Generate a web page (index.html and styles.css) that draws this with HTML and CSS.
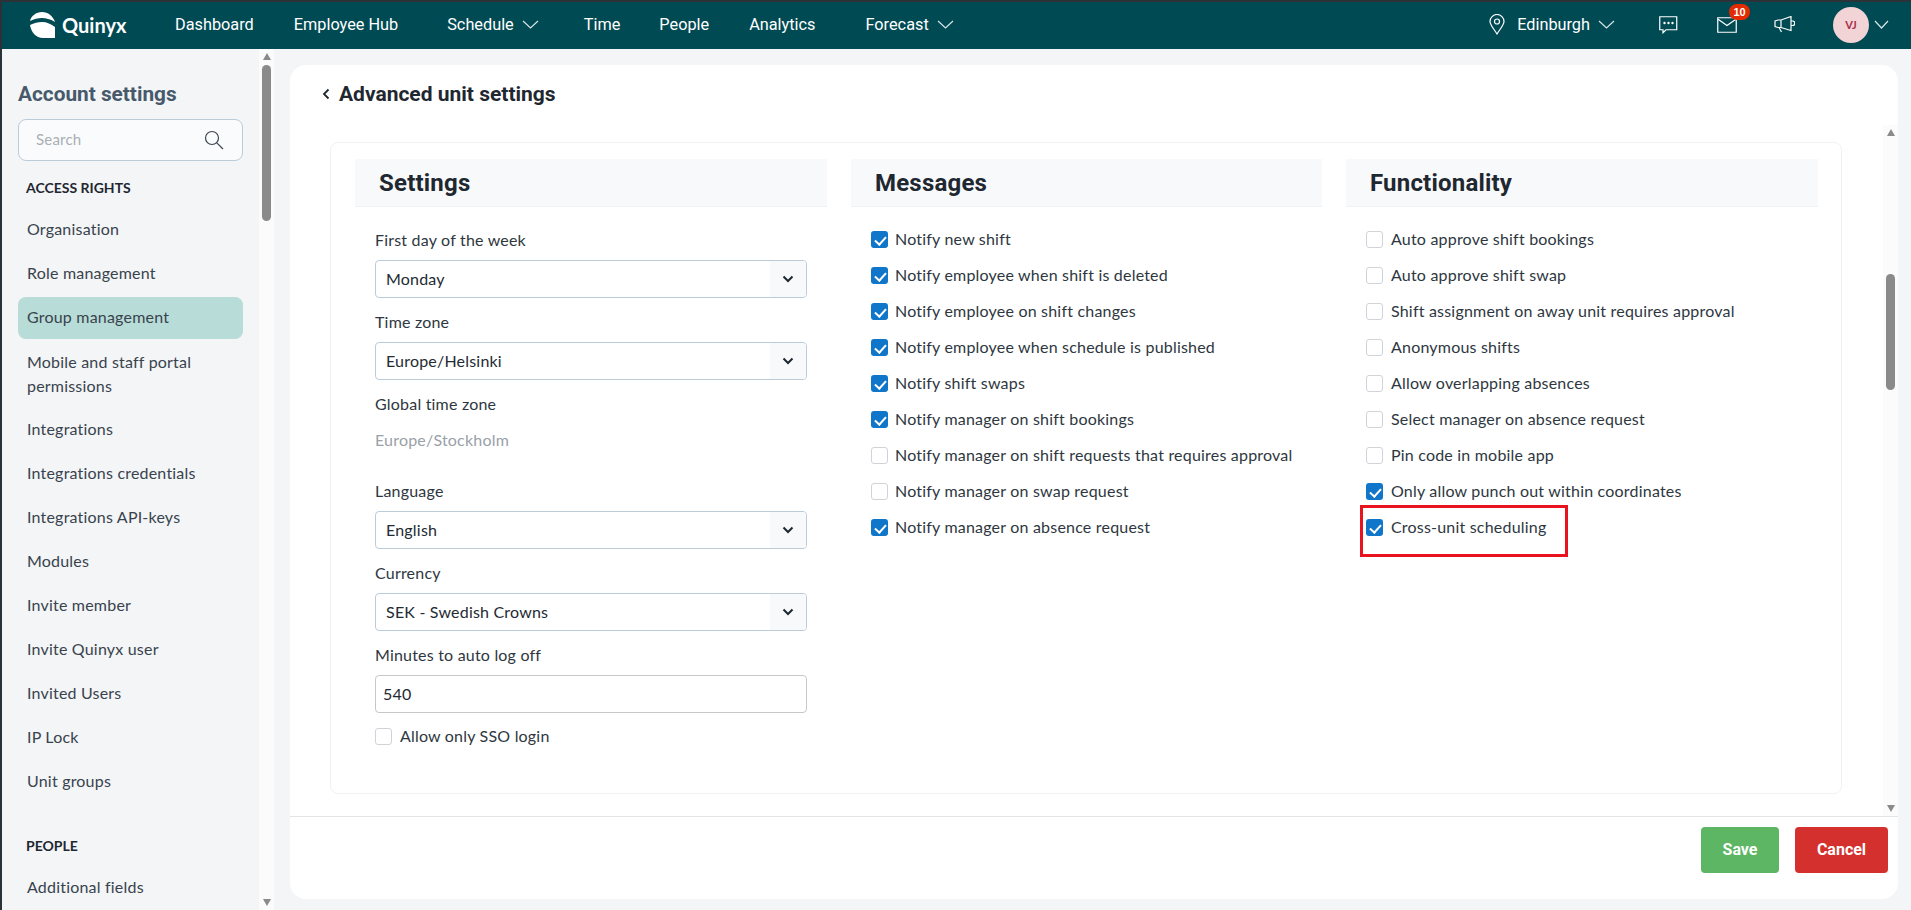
FILE: index.html
```html
<!DOCTYPE html>
<html>
<head>
	<meta charset="utf-8">
	<title>Advanced unit settings</title>
	<link rel="stylesheet" href="styles.css">
</head>
<body>

<div class="nav">
	<a class="logo" href="#">
		<svg width="27" height="26" viewBox="0 0 27 26"><path fill="#fff" d="M1 9C2 4 7 0 13 0c6 0 11 4 13 10-5-3-9-4-13-4C9 6 5 7 1 9z"/><path fill="#fff" d="M1 13c4-2 8-3 12-3 5 0 9 2 13 5v11H14C7 26 2 20 1 13z"/></svg>
		<span>Quinyx</span>
	</a>
	<ul class="menu">
		<li class="m-dash"><a href="#">Dashboard</a></li>
		<li class="m-hub"><a href="#">Employee Hub</a></li>
		<li class="m-sched"><a href="#">Schedule</a><svg class="caret" width="17" height="9" viewBox="0 0 17 9"><path d="M1 1l7.500 7L16 1"/></svg></li>
		<li class="m-time"><a href="#">Time</a></li>
		<li class="m-people"><a href="#">People</a></li>
		<li class="m-ana"><a href="#">Analytics</a></li>
		<li class="m-fore"><a href="#">Forecast</a><svg class="caret" width="17" height="9" viewBox="0 0 17 9"><path d="M1 1l7.500 7L16 1"/></svg></li>
	</ul>
	<div class="nav-right">
		<svg class="pin" width="16" height="21" viewBox="0 0 16 21"><path d="M8 20C5 15 1 11 1 7.500a7 7 0 0 1 14 0C15 11 11 15 8 20z"/><circle cx="8" cy="7.500" r="2.500"/></svg>
		<span class="place">Edinburgh</span>
		<svg class="caret place-caret" width="17" height="9" viewBox="0 0 17 9"><path d="M1 1l7.500 7L16 1"/></svg>
		<svg class="icon-chat" width="19" height="18" viewBox="0 0 19 18"><path d="M.75.75h17v13H7l-3 3v-3H.75z"/><circle class="dot" cx="5.500" cy="7" r="1.200"/><circle class="dot" cx="9.500" cy="7" r="1.200"/><circle class="dot" cx="13.500" cy="7" r="1.200"/></svg>
		<div class="mail">
			<svg width="20" height="16" viewBox="0 0 20 16"><path d="M.75.75h18.500v14.500H.75zM.75 2L10 8.500 19.250 2"/></svg>
			<span class="badge">10</span>
		</div>
		<svg class="icon-horn" width="21" height="17" viewBox="0 0 21 17"><path d="M1 5l3-1h3l10-3.500v14L7 11.500H4L1 10.500zM7 4v7.500M17 5h1.500a2 2 0 0 1 0 4.500H17M5 11.500L7.500 16"/></svg>
		<span class="avatar">VJ</span>
		<svg class="caret" width="15" height="9" viewBox="0 0 15 9"><path d="M1 1l6.500 7L14 1"/></svg>
	</div>
</div>

<div class="page">

	<div class="side">
		<div class="side-in">
			<h2>Account settings</h2>
			<div class="search">
				<span>Search</span>
				<svg width="20" height="20" viewBox="0 0 20 20"><circle cx="8" cy="8" r="6.500"/><path d="M12.800 12.800L19 19"/></svg>
			</div>
			<h3>ACCESS RIGHTS</h3>
			<ul class="side-list">
				<li>Organisation</li>
				<li>Role management</li>
				<li class="on">Group management</li>
				<li class="two">Mobile and staff portal permissions</li>
				<li>Integrations</li>
				<li>Integrations credentials</li>
				<li>Integrations API-keys</li>
				<li>Modules</li>
				<li>Invite member</li>
				<li>Invite Quinyx user</li>
				<li>Invited Users</li>
				<li>IP Lock</li>
				<li>Unit groups</li>
			</ul>
			<h3 class="people">PEOPLE</h3>
			<ul class="side-list">
				<li>Additional fields</li>
			</ul>
		</div>
		<div class="bar">
			<i class="up"></i>
			<b class="thumb thumb-side"></b>
			<i class="down"></i>
		</div>
	</div>

	<div class="panel">
		<div class="panel-head">
			<svg width="8" height="12" viewBox="0 0 8 12"><path d="M6.500 1.500L2 6l4.500 4.500"/></svg>
			<h1>Advanced unit settings</h1>
		</div>
		<div class="panel-body">
			<div class="scroll">
				<div class="card">

					<div class="col">
						<h4>Settings</h4>
						<div class="form">
							<label>First day of the week</label>
							<div class="select"><span>Monday</span><em><svg width="12" height="8" viewBox="0 0 12 8"><path d="M1.500 1.500L6 6l4.500-4.500"/></svg></em></div>
							<label>Time zone</label>
							<div class="select"><span>Europe/Helsinki</span><em><svg width="12" height="8" viewBox="0 0 12 8"><path d="M1.500 1.500L6 6l4.500-4.500"/></svg></em></div>
							<label>Global time zone</label>
							<div class="static">Europe/Stockholm</div>
							<label>Language</label>
							<div class="select"><span>English</span><em><svg width="12" height="8" viewBox="0 0 12 8"><path d="M1.500 1.500L6 6l4.500-4.500"/></svg></em></div>
							<label>Currency</label>
							<div class="select"><span>SEK - Swedish Crowns</span><em><svg width="12" height="8" viewBox="0 0 12 8"><path d="M1.500 1.500L6 6l4.500-4.500"/></svg></em></div>
							<label>Minutes to auto log off</label>
							<div class="input">540</div>
							<div class="check sso"><i class="box"></i><span>Allow only SSO login</span></div>
						</div>
					</div>

					<div class="col">
						<h4>Messages</h4>
						<div class="checks">
							<div class="check"><i class="box on"></i><span>Notify new shift</span></div>
							<div class="check"><i class="box on"></i><span>Notify employee when shift is deleted</span></div>
							<div class="check"><i class="box on"></i><span>Notify employee on shift changes</span></div>
							<div class="check"><i class="box on"></i><span>Notify employee when schedule is published</span></div>
							<div class="check"><i class="box on"></i><span>Notify shift swaps</span></div>
							<div class="check"><i class="box on"></i><span>Notify manager on shift bookings</span></div>
							<div class="check"><i class="box"></i><span>Notify manager on shift requests that requires approval</span></div>
							<div class="check"><i class="box"></i><span>Notify manager on swap request</span></div>
							<div class="check"><i class="box on"></i><span>Notify manager on absence request</span></div>
						</div>
					</div>

					<div class="col">
						<h4>Functionality</h4>
						<div class="checks">
							<div class="check"><i class="box"></i><span>Auto approve shift bookings</span></div>
							<div class="check"><i class="box"></i><span>Auto approve shift swap</span></div>
							<div class="check"><i class="box"></i><span>Shift assignment on away unit requires approval</span></div>
							<div class="check"><i class="box"></i><span>Anonymous shifts</span></div>
							<div class="check"><i class="box"></i><span>Allow overlapping absences</span></div>
							<div class="check"><i class="box"></i><span>Select manager on absence request</span></div>
							<div class="check"><i class="box"></i><span>Pin code in mobile app</span></div>
							<div class="check"><i class="box on"></i><span>Only allow punch out within coordinates</span></div>
							<div class="check marked"><i class="box on"></i><span>Cross-unit scheduling</span><b class="redbox"></b></div>
						</div>
					</div>

				</div>
			</div>
			<div class="bar">
				<i class="up"></i>
				<b class="thumb thumb-main"></b>
				<i class="down"></i>
			</div>
		</div>
		<div class="panel-foot">
			<a class="btn save" href="#">Save</a>
			<a class="btn cancel" href="#">Cancel</a>
		</div>
	</div>

</div>

</body>
</html>
```

FILE: styles.css
```css
* {box-sizing: border-box;}
html, body {margin: 0; padding: 0; height: 100%; overflow: hidden;}
body {display: flex; flex-direction: column; background-color: #f3f5f7; border-top: 2px solid #2c3338; border-left: 2px solid #2c3338; font-family: "Lato", "Open Sans", sans-serif; font-size: 16px; letter-spacing: .2px; color: #232b33;}
ul {list-style: none; margin: 0; padding: 0;}
a {text-decoration: none; color: inherit;}
h1, h2, h3, h4 {margin: 0;}

/* top bar */
.nav {display: flex; align-items: center; height: 47px; flex: none; padding-bottom: 2px; background-color: #004a54; color: #fff; font-family: "Roboto", sans-serif; font-size: 16.300px; letter-spacing: 0;}
.nav svg {fill: none; stroke: #fff; stroke-width: 1.200;}
.logo {display: flex; align-items: center; gap: 6px; margin-left: 27px; width: 106px; font-family: "Lato", sans-serif; font-weight: 700; font-size: 20px;}
.logo svg {stroke: none;}
.menu {display: flex;}
.menu li {display: flex; align-items: center; gap: 8px;}
.m-dash {margin-left: 40px;}
.m-hub {margin-left: 40px;}
.m-sched {margin-left: 49px;}
.m-time {margin-left: 45px;}
.m-people {margin-left: 39px;}
.m-ana {margin-left: 40px;}
.m-fore {margin-left: 50px;}
.caret {opacity: .85;}
.nav-right {display: flex; align-items: center; margin-left: auto; margin-right: 22px;}
.place {margin-left: 12px;}
.place-caret {margin-left: 8px;}
.icon-chat {margin-left: 44px;}
.icon-chat .dot {fill: #fff; stroke: none;}
.mail {position: relative; display: flex; margin-left: 39px;}
.badge {position: absolute; left: 12px; top: -13px; width: 21px; height: 16px; border-radius: 8px; background-color: #e32a00; font-family: "Liberation Sans", sans-serif; font-weight: 700; font-size: 11px; line-height: 16px; text-align: center;}
.icon-horn {margin-left: 37px;}
.avatar {display: block; width: 36px; height: 36px; margin: 0 5px 0 38px; border-radius: 50%; background-color: #f2d3d6; color: #a8324a; font-family: "Lato", sans-serif; font-size: 11px; font-weight: 700; line-height: 36px; text-align: center;}

/* page */
.page {display: flex; flex: 1; min-height: 0;}

/* left menu */
.side {display: flex; width: 272px; flex: none; overflow: hidden;}
.side-in {width: 257px; flex: none; padding: 0 16px;}
.side h2 {margin-top: 33px; font-family: "Roboto", sans-serif; font-size: 20.800px; line-height: 24px; font-weight: 700; letter-spacing: 0; color: #47596a;}
.search {display: flex; align-items: center; justify-content: space-between; height: 42px; margin-top: 13px; padding: 0 18px 0 17px; border: 1px solid #bccbd8; border-radius: 8px; background-color: #fafbfc; color: #a9afb5; font-size: 15px;}
.search span {margin-top: -2px;}
.search svg {fill: none; stroke: #3a4650; stroke-width: 1.200;}
.side h3 {margin: 17px 0 0 8px; font-size: 14px; line-height: 20px; font-weight: 700; letter-spacing: 0; color: #1f2830;}
.side h3.people {margin-top: 33px;}
.side-list {margin-top: 11px;}
.side-list li {height: 42px; margin-bottom: 2px; padding-left: 9px; line-height: 40px; border-radius: 8px; color: #39434d;}
.side-list li.on {background-color: #b8dcd7;}
.side-list li.two {display: flex; align-items: center; height: 68px; margin: 0; padding-bottom: 2px; line-height: 24px;}

/* fake scrollbars, the page is a picture of a scrolled state */
.bar {display: flex; flex-direction: column; align-items: center; width: 15px; flex: none; background-color: #fbfbfb;}
.bar .up {width: 0; height: 0; margin-top: 4px; border-left: 4.500px solid transparent; border-right: 4.500px solid transparent; border-bottom: 7px solid #8a8a8a;}
.bar .down {width: 0; height: 0; margin-top: auto; margin-bottom: 4px; border-left: 4.500px solid transparent; border-right: 4.500px solid transparent; border-top: 7px solid #8a8a8a;}
.thumb {display: block; width: 9px; border-radius: 5px; background-color: #8a8a8a;}
.thumb-side {height: 156px; margin-top: 5px;}
.thumb-main {height: 116px; margin-top: 138px;}

/* main panel */
.panel {display: flex; flex-direction: column; width: 1608px; height: 834px; margin: 16px 0 0 16px; flex: none; border-radius: 16px; background-color: #fff; overflow: hidden;}
.panel-head {display: flex; align-items: center; gap: 9px; height: 60px; flex: none; padding: 0 0 2px 32px;}
.panel-head svg {fill: none; stroke: #1f2830; stroke-width: 1.800;}
.panel-head h1 {font-family: "Roboto", sans-serif; font-size: 21px; font-weight: 700; letter-spacing: 0; color: #1f2830;}
.panel-body {display: flex; flex: 1; min-height: 0;}
.scroll {flex: 1; padding: 17px 0 0 40px;}
.card {display: grid; grid-template-columns: 472px 471px 472px; column-gap: 24px; width: 1512px; height: 652px; padding: 16px 24px 0; border: 1px solid #eff1f3; border-radius: 8px;}
.col h4 {height: 48px; padding-left: 24px; border-bottom: 1px solid #eff1f3; background-color: #f8f9fb; font-family: "Roboto", sans-serif; font-size: 24px; line-height: 48px; font-weight: 700; letter-spacing: .2px; color: #1f2830;}
.form {padding: 22px 20px 0;}
.form label {display: block; height: 22px; line-height: 22px; margin-bottom: 9px; color: #2e3740;}
.select {display: flex; justify-content: space-between; height: 38px; margin-bottom: 13px; border: 1px solid #bccbd8; border-radius: 4px; line-height: 35px; overflow: hidden;}
.select span {padding-left: 10px;}
.select em {display: flex; align-items: center; justify-content: center; width: 36px; background-color: #f8f9fb;}
.select svg {fill: none; stroke: #1f2830; stroke-width: 2;}
.static {height: 22px; line-height: 22px; margin: 14px 0 29px; color: #9aa1a8;}
.input {height: 38px; margin-bottom: 13px; padding-left: 7px; border: 1px solid #c5c8cb; border-radius: 4px; line-height: 36px; color: #1f2830;}
.checks {padding: 14px 20px 0;}
.check {position: relative; display: flex; align-items: center; gap: 7px; height: 36px; color: #2e3740;}
.check span {margin-top: -2px;}
.col:last-child .check, .form .sso {gap: 8px;}
.form .sso {height: 20px;}
.box {display: block; width: 17px; height: 17px; flex: none; border: 1px solid #d0d4d8; border-radius: 3px; background-color: #fff;}
.box.on {position: relative; border: 0; background-color: #0f76c9;}
.box.on:after {content: ""; position: absolute; left: 6px; top: 3px; width: 5px; height: 9px; border: solid #fff; border-width: 0 2.500px 2.500px 0; transform: rotate(42deg);}
.redbox {position: absolute; left: -6px; top: -4px; width: 208px; height: 52px; border: 3px solid #e8131f;}

/* footer */
.panel-foot {display: flex; justify-content: flex-end; gap: 16px; height: 83px; flex: none; padding: 10px 10px 0 0; border-top: 1px solid #e2e4e6;}
.btn {display: block; height: 46px; border-radius: 4px; font-family: "Roboto", sans-serif; font-size: 16px; font-weight: 700; letter-spacing: 0; line-height: 46px; text-align: center; color: #fff;}
.save {width: 78px; background-color: #5cb663;}
.cancel {width: 93px; background-color: #d4302d;}
```
